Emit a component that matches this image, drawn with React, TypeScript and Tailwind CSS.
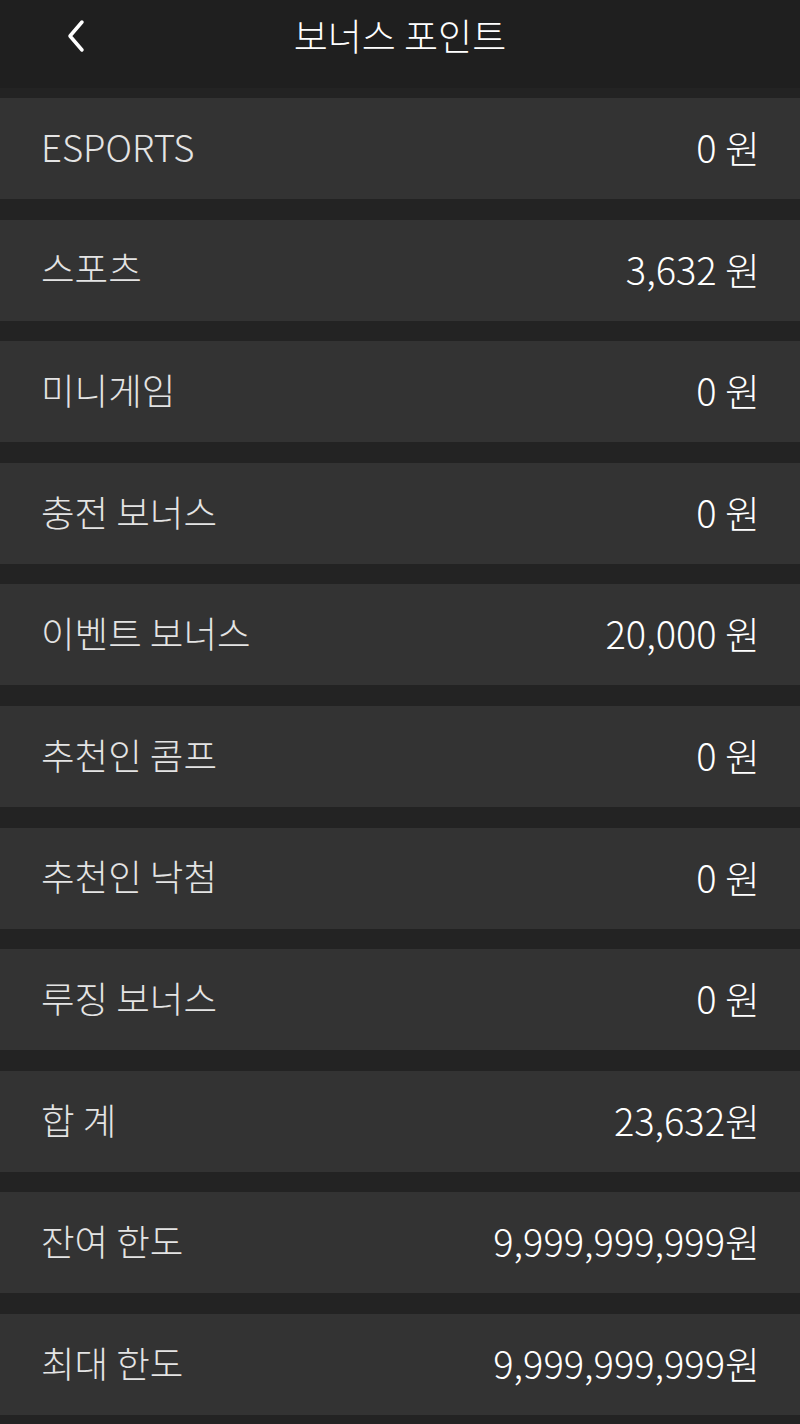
const rows: { label: string; value: string }[] = [
  { label: 'ESPORTS', value: '0 원' },
  { label: '스포츠', value: '3,632 원' },
  { label: '미니게임', value: '0 원' },
  { label: '충전 보너스', value: '0 원' },
  { label: '이벤트 보너스', value: '20,000 원' },
  { label: '추천인 콤프', value: '0 원' },
  { label: '추천인 낙첨', value: '0 원' },
  { label: '루징 보너스', value: '0 원' },
  { label: '합 계', value: '23,632원' },
  { label: '잔여 한도', value: '9,999,999,999원' },
  { label: '최대 한도', value: '9,999,999,999원' },
];

export default function App() {
  return (
    <div
      className="min-h-[1424px] w-full bg-[#232323] text-white"
      style={{ fontFamily: '"Noto Sans CJK KR", "Noto Sans", sans-serif' }}
    >
      <header className="h-[88px] bg-[#1f1f1f]">
        <div className="relative flex h-[72px] items-center justify-center">
          <button className="absolute left-[60px] top-[18px] flex h-[36px] w-[32px] items-center justify-center">
            <svg width="22" height="34" viewBox="0 0 22 34" fill="none">
              <path
                d="M17 3 L5 17 L17 31"
                stroke="white"
                strokeWidth="3.5"
                strokeLinecap="round"
                strokeLinejoin="round"
              />
            </svg>
          </button>
          <h1 className="-mt-[2px] text-[37px] font-light leading-none">보너스 포인트</h1>
        </div>
      </header>

      <div className="flex flex-col gap-[20.6px] pt-[10px]">
        {rows.map((row) => (
          <div
            key={row.label}
            className="flex h-[101px] items-center justify-between bg-[#333333] pl-[41px] pr-[40px]"
          >
            <span className="-mt-[3px] text-[36.5px] font-light leading-none text-[#e4e4e4]">
              {row.label}
            </span>
            <span className="-mt-[3px] text-[38px] font-light leading-none text-white">
              {row.value}
            </span>
          </div>
        ))}
      </div>
    </div>
  );
}
